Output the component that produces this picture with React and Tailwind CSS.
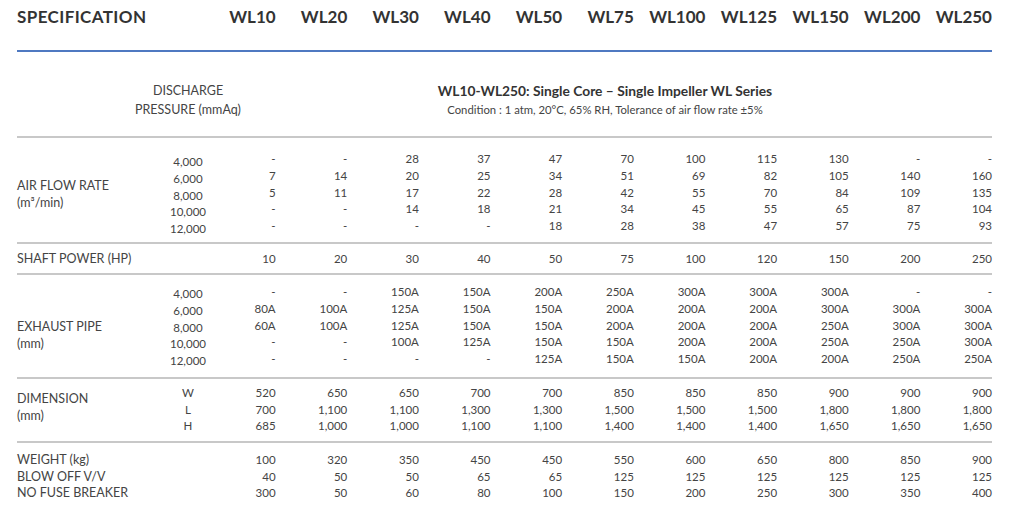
import React from "react";

const models = ["WL10", "WL20", "WL30", "WL40", "WL50", "WL75", "WL100", "WL125", "WL150", "WL200", "WL250"];
const flows = ["4,000", "6,000", "8,000", "10,000", "12,000"];

const airFlow = [
  ["-", "7", "5", "-", "-"],
  ["-", "14", "11", "-", "-"],
  ["28", "20", "17", "14", "-"],
  ["37", "25", "22", "18", "-"],
  ["47", "34", "28", "21", "18"],
  ["70", "51", "42", "34", "28"],
  ["100", "69", "55", "45", "38"],
  ["115", "82", "70", "55", "47"],
  ["130", "105", "84", "65", "57"],
  ["-", "140", "109", "87", "75"],
  ["-", "160", "135", "104", "93"],
];

const shaft = ["10", "20", "30", "40", "50", "75", "100", "120", "150", "200", "250"].map((v) => [v]);

const exhaust = [
  ["-", "80A", "60A", "-", "-"],
  ["-", "100A", "100A", "-", "-"],
  ["150A", "125A", "125A", "100A", "-"],
  ["150A", "150A", "150A", "125A", "-"],
  ["200A", "150A", "150A", "150A", "125A"],
  ["250A", "200A", "200A", "150A", "150A"],
  ["300A", "200A", "200A", "200A", "150A"],
  ["300A", "200A", "200A", "200A", "200A"],
  ["300A", "300A", "250A", "250A", "200A"],
  ["-", "300A", "300A", "250A", "250A"],
  ["-", "300A", "300A", "300A", "250A"],
];

const dimension = [
  ["520", "700", "685"],
  ["650", "1,100", "1,000"],
  ["650", "1,100", "1,000"],
  ["700", "1,300", "1,100"],
  ["700", "1,300", "1,100"],
  ["850", "1,500", "1,400"],
  ["850", "1,500", "1,400"],
  ["850", "1,500", "1,400"],
  ["900", "1,800", "1,650"],
  ["900", "1,800", "1,650"],
  ["900", "1,800", "1,650"],
];

const weight = [
  ["100", "40", "300"],
  ["320", "50", "50"],
  ["350", "50", "60"],
  ["450", "65", "80"],
  ["450", "65", "100"],
  ["550", "125", "150"],
  ["600", "125", "200"],
  ["650", "125", "250"],
  ["800", "125", "300"],
  ["850", "125", "350"],
  ["900", "125", "400"],
];

const grid = "grid grid-cols-[155px_32px_repeat(11,minmax(0,1fr))]";

function Section({ label, labelClass, sub, subClass, values, className, lineClass }) {
  return (
    <div className={`${grid} ${className}`}>
      <div className={`flex flex-col text-[12.5px] leading-[17px] whitespace-nowrap ${labelClass}`}>
        {label.map((l) => (
          <span key={l} className={lineClass}>
            {l}
          </span>
        ))}
      </div>
      <div className={`flex flex-col items-center ${subClass}`}>
        {sub.map((s) => (
          <span key={s} className={`whitespace-nowrap ${lineClass}`}>
            {s}
          </span>
        ))}
      </div>
      {values.map((col, i) => (
        <div key={i} className="flex flex-col items-end">
          {col.map((v, j) => (
            <span key={j} className={lineClass}>
              {v}
            </span>
          ))}
        </div>
      ))}
    </div>
  );
}

export default function App() {
  return (
    <div className="w-[1010px] h-[510px] bg-white overflow-hidden font-['Lato',sans-serif] text-[#444] text-[11.5px]">
      <div className="ml-[17px] w-[975px]">
        {/* heading */}
        <div className={`${grid} h-[52px] border-b-2 border-[#4f79c1] text-[#333] font-bold text-[17px] leading-[33px]`}>
          <div className="col-span-2 tracking-[0.4px]">SPECIFICATION</div>
          {models.map((m) => (
            <div key={m} className="text-right">
              {m}
            </div>
          ))}
        </div>

        {/* discharge */}
        <div className={`${grid} h-[86px] pt-[29px] border-b-2 border-[#c8c8c8] leading-[19px]`}>
          <div />
          <div className="flex flex-col items-center text-[12.5px]">
            <span className="whitespace-nowrap">DISCHARGE</span>
            <span className="whitespace-nowrap">PRESSURE (mmAq)</span>
          </div>
          <div className="col-span-11 flex flex-col items-center pl-[14px]">
            <span className="font-bold text-[13.8px] text-[#333]">
              WL10-WL250: Single Core – Single Impeller WL Series
            </span>
            <span className="text-[11.3px]">Condition : 1 atm, 20°C, 65% RH, Tolerance of air flow rate ±5%</span>
          </div>
        </div>

        <Section
          label={["AIR FLOW RATE", "(m³/min)"]}
          labelClass="pt-[27px]"
          sub={flows}
          subClass="pt-[3px]"
          values={airFlow}
          lineClass="leading-[16.8px]"
          className="h-[106px] pt-[13px] border-b-2 border-[#c8c8c8]"
        />

        <Section
          label={["SHAFT POWER (HP)"]}
          labelClass=""
          sub={[]}
          subClass=""
          values={shaft}
          lineClass="leading-[17px]"
          className="h-[31px] pt-[6px] border-b-2 border-[#c8c8c8]"
        />

        <Section
          label={["EXHAUST PIPE", "(mm)"]}
          labelClass="pt-[35px]"
          sub={flows}
          subClass="pt-[2px]"
          values={exhaust}
          lineClass="leading-[16.8px]"
          className="h-[104px] pt-[9px] border-b-2 border-[#c8c8c8]"
        />

        <Section
          label={["DIMENSION", "(mm)"]}
          labelClass="pt-[6px]"
          sub={["W", "L", "H"]}
          subClass=""
          values={dimension}
          lineClass="leading-[16.5px]"
          className="h-[64px] pt-[6px] border-b-2 border-[#c8c8c8]"
        />

        <Section
          label={["WEIGHT (kg)", "BLOW OFF V/V", "NO FUSE BREAKER"]}
          labelClass=""
          sub={[]}
          subClass=""
          values={weight}
          lineClass="leading-[16.6px]"
          className="pt-[9px]"
        />
      </div>
    </div>
  );
}
